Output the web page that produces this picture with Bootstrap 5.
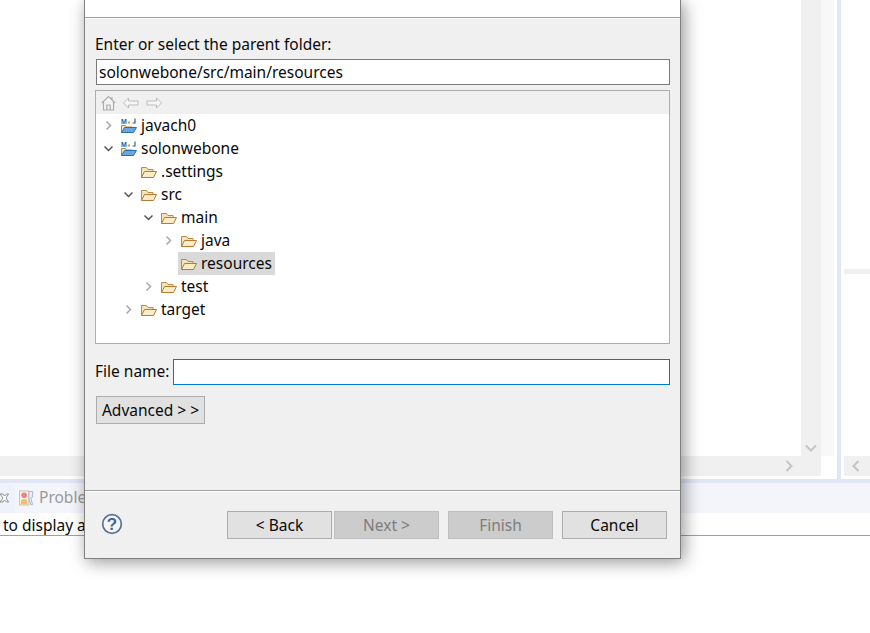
<!doctype html>
<html lang="en"><head><meta charset="utf-8"><title>New File</title>
<link href="https://cdn.jsdelivr.net/npm/bootstrap@5.3.0/dist/css/bootstrap.min.css" rel="stylesheet">
<style>
html,body{margin:0;height:633px;overflow:hidden;background:#fff}
body{font-family:"Noto Sans","Open Sans",sans-serif;font-size:15.5px;color:#0a0a0a}
.desk{width:870px;height:633px;position:relative;overflow:hidden}
.top-area{height:479px}
.editor{width:837px;background:#fff}
.ed-body{height:456px}
.ed-main{width:801px}
.vbar{width:20px;background:#f0f0f0}
.vgap{width:13px;background:#f8f8f8}
.ed-wing{width:3px;background:#fff}
.hbar{height:20px;width:821px;background:#f0f0f0}
.hbar svg{margin-right:28px}
.sash{width:4px;background:#e0e6f5}
.right-pane{flex:1;padding-left:3px;background:#fff}
.r-mark{height:5px;background:#f0f0f0;margin-top:269px;margin-bottom:182px}
.r-hbar{height:20px;background:#f0f0f0}
.blueline{height:4px;background:#e0e6f5}
.tabstrip{height:30px;background:#f4f5fb}
.tab-on{width:15px;height:30px;background:#eef3fb;border-top-right-radius:6px}
.tab-icon{margin-left:4px}
.tab-text{color:#9a9a9a;margin-left:5px}
.msg{height:23px;border-bottom:1px solid #a0a0a0;line-height:24px;padding-left:3px}
.chev{width:9px;height:9px;flex:none}
.dlg{position:absolute;left:84px;top:0;width:597px;height:559px;background:#f0f0f0;border:1px solid #808080;border-top:0;box-shadow:3px 3px 16px rgba(0,0,0,.42)}
.banner{height:18px;background:#fff;border-bottom:1px solid #a0a0a0;box-shadow:0 1px 0 #fff}
.dlg-body{padding:0 10px;height:472px}
.lbl{height:41px;padding-top:14px;line-height:24px}
.path-in{display:block;width:574px;height:26px;margin-left:1px;border:1px solid #7a7a7a;background:#fff;padding:0 2px;font:inherit;color:#0a0a0a;line-height:24px;outline:0;border-radius:0}
.tree-box{margin-top:5px;height:254px;width:575px;background:#fff;border:1px solid #adadad}
.tbar{height:23px;background:#f0f0f0;padding-left:5px;gap:7px}
.row-t{height:23px;line-height:23px;white-space:nowrap}
.row-t svg{flex:none}
.ic{width:17px;height:16px;margin-right:3px;margin-left:3px}
.twisty{width:20px;height:23px;flex:none}
.l0{padding-left:2px}.l1{padding-left:22px}.l2{padding-left:42px}.l3{padding-left:62px}
.sel{background:#d9d9d9;padding-right:3px;display:flex;align-items:center;height:23px}
.fname{margin-top:15px;height:26px;width:575px;gap:4px}
.fname-in{flex:1;min-width:0;height:26px;border:1px solid #0078d7;background:#fff;padding:0 2px;outline:0;border-radius:0}
.w-btn{background:#e1e1e1;border:1px solid #adadad;border-radius:0;color:#0a0a0a;font:inherit;padding:0;height:28px;line-height:24px}
.w-btn:disabled{background:#ccc;color:#7d7d7d;border-color:#bfbfbf;opacity:1}
.adv{margin-top:11px;margin-left:1px;width:109px}
.sep{height:2px;border-top:1px solid #a0a0a0;background:#fff}
.foot{padding:19px 13px 0 16px;height:66px}
.btn-w{width:105px}
.help{width:22px;height:22px;margin-top:2px}
.g1{margin-left:2px}.g2{margin-left:9px}
</style></head><body>
<div class="desk">
 <div class="top-area d-flex">
  <div class="editor">
   <div class="d-flex ed-body">
    <div class="ed-main"></div>
    <div class="vbar d-flex align-items-end justify-content-center pb-1">
     <svg width="12" height="8" viewBox="0 0 12 8"><path d="M1 1.500l5 5 5-5" fill="none" stroke="#c4c4c4" stroke-width="2"/></svg>
    </div>
    <div class="vgap"></div>
    <div class="ed-wing"></div>
   </div>
   <div class="hbar d-flex align-items-center justify-content-end">
    <svg width="8" height="12" viewBox="0 0 8 12"><path d="M1.500 1l5 5-5 5" fill="none" stroke="#c4c4c4" stroke-width="2"/></svg>
   </div>
  </div>
  <div class="sash"></div>
  <div class="right-pane">
   <div class="r-mark"></div>
   <div class="r-hbar d-flex align-items-center ps-2"><svg width="8" height="12" viewBox="0 0 8 12"><path d="M6.500 1l-5 5 5 5" fill="none" stroke="#c4c4c4" stroke-width="2"/></svg></div>
  </div>
 </div>
 <div class="blueline"></div>
 <div class="tabstrip d-flex align-items-center">
  <div class="tab-on d-flex align-items-center">
   <svg width="9" height="10" viewBox="0 0 9 10"><path d="M0 1l3 0 1.500 2 2-2 2 0-2.500 4 2.500 4h-2l-2-2-1.500 2h-3l3-4z" fill="#fff" stroke="#777" stroke-width=".8"/></svg>
  </div>
  <svg class="tab-icon" width="15" height="16" viewBox="0 0 16 16"><rect x=".5" y=".5" width="10" height="15" fill="#f6f1e4" stroke="#c9c3b5"/><path d="M10.500 1h4v6l-2 1 2 7h-2l-2-6z" fill="#e8edf4" stroke="#a7b6cc"/><circle cx="5.500" cy="5" r="3" fill="#e9838a"/><path d="M2 15v-3a3.500 3 0 017 0v3z" fill="#eec070"/></svg>
  <span class="tab-text">Problems</span>
 </div>
 <div class="msg">to display a</div>

 <div class="dlg d-flex flex-column">
  <div class="banner"></div>
  <div class="dlg-body">
   <div class="lbl">Enter or select the parent folder:</div>
   <input class="path-in" value="solonwebone/src/main/resources" aria-label="parent folder">
   <div class="tree-box">
    <div class="tbar d-flex align-items-center">
     <svg width="15" height="16" viewBox="0 0 15 16"><path d="M.8 8L7.500 1.500 14.200 8M2.500 6.800V15h10V6.800M5.800 15v-5h3.400v5M11 2v2.800" fill="#f4f4f4" stroke="#adadad" stroke-width="1.200"/></svg>
     <svg width="16" height="16" viewBox="0 0 16 16"><path d="M.5 8l5-5v3h9.500v4H5.500v3z" fill="#f6f6f6" stroke="#bcbcbc"/></svg>
     <svg width="16" height="16" viewBox="0 0 16 16"><path d="M15.500 8l-5-5v3H1v4h9.500v3z" fill="#f6f6f6" stroke="#bcbcbc"/></svg>
    </div>
    <div class="row-t d-flex align-items-center l0"><span class="twisty d-flex align-items-center justify-content-center"><svg class="chev" viewBox="0 0 9 9"><use href="#c-r"/></svg></span><svg class="ic" viewBox="0 0 17 16"><use href="#proj"/></svg>javach0</div>
    <div class="row-t d-flex align-items-center l0"><span class="twisty d-flex align-items-center justify-content-center"><svg class="chev" viewBox="0 0 9 9"><use href="#c-d"/></svg></span><svg class="ic" viewBox="0 0 17 16"><use href="#proj"/></svg>solonwebone</div>
    <div class="row-t d-flex align-items-center l1"><span class="twisty"></span><svg class="ic" viewBox="0 0 17 16"><use href="#fold"/></svg>.settings</div>
    <div class="row-t d-flex align-items-center l1"><span class="twisty d-flex align-items-center justify-content-center"><svg class="chev" viewBox="0 0 9 9"><use href="#c-d"/></svg></span><svg class="ic" viewBox="0 0 17 16"><use href="#fold"/></svg>src</div>
    <div class="row-t d-flex align-items-center l2"><span class="twisty d-flex align-items-center justify-content-center"><svg class="chev" viewBox="0 0 9 9"><use href="#c-d"/></svg></span><svg class="ic" viewBox="0 0 17 16"><use href="#fold"/></svg>main</div>
    <div class="row-t d-flex align-items-center l3"><span class="twisty d-flex align-items-center justify-content-center"><svg class="chev" viewBox="0 0 9 9"><use href="#c-r"/></svg></span><svg class="ic" viewBox="0 0 17 16"><use href="#fold"/></svg>java</div>
    <div class="row-t d-flex align-items-center l3"><span class="twisty"></span><span class="sel"><svg class="ic" viewBox="0 0 17 16"><use href="#fold"/></svg>resources</span></div>
    <div class="row-t d-flex align-items-center l2"><span class="twisty d-flex align-items-center justify-content-center"><svg class="chev" viewBox="0 0 9 9"><use href="#c-r"/></svg></span><svg class="ic" viewBox="0 0 17 16"><use href="#fold"/></svg>test</div>
    <div class="row-t d-flex align-items-center l1"><span class="twisty d-flex align-items-center justify-content-center"><svg class="chev" viewBox="0 0 9 9"><use href="#c-r"/></svg></span><svg class="ic" viewBox="0 0 17 16"><use href="#fold"/></svg>target</div>
   </div>
   <div class="fname d-flex align-items-center"><label for="fn">File name:</label><input id="fn" class="fname-in"></div>
   <button class="w-btn adv" type="button">Advanced &gt; &gt;</button>
  </div>
  <div class="sep"></div>
  <div class="foot d-flex">
   <svg class="help" viewBox="0 0 22 22"><circle cx="11" cy="11" r="9.300" fill="#f4f6fa" stroke="#5a7198" stroke-width="1.700"/><text x="11" y="17" text-anchor="middle" font-family="Liberation Sans" font-weight="700" font-size="17" fill="#4a6390">?</text></svg>
   <div class="ms-auto d-flex">
    <button class="w-btn btn-w" type="button">&lt; Back</button>
    <button class="w-btn btn-w g1" type="button" disabled>Next &gt;</button>
    <button class="w-btn btn-w g2" type="button" disabled>Finish</button>
    <button class="w-btn btn-w g2" type="button">Cancel</button>
   </div>
  </div>
 </div>
</div>
<svg width="0" height="0" class="position-absolute">
 <defs>
  <g id="c-r"><path d="M2.500 .5l4 4-4 4" fill="none" stroke="#a8a8a8" stroke-width="1.500"/></g>
  <g id="c-d"><path d="M.5 2.500l4 4 4-4" fill="none" stroke="#555" stroke-width="1.500"/></g>
  <g id="fold"><path d="M.5 13.500V3.500h5l1.500 2h5v2" fill="#f7e3b8" stroke="#b98a4a"/><path d="M.5 13.500l3-6h12l-3 6z" fill="#fbecc8" stroke="#b57c35"/></g>
  <g id="proj"><path d="M.5 14.500V7.500h4l1 1.500h6v1" fill="#f7e3b8" stroke="#b98a4a"/><path d="M.5 14.500l3-5h12l-3 5z" fill="#6aa6e0" stroke="#2f6cad"/><text x="0" y="6" font-family="Liberation Sans" font-weight="700" font-size="7" fill="#2f5a8f">M</text><circle cx="8" cy="4.500" r="1.200" fill="#d8a24a"/><path d="M14 .5v4.500h-2.500" fill="none" stroke="#3a5f8f" stroke-width="1.200"/></g>
 </defs>
</svg>
<script src="https://cdn.jsdelivr.net/npm/bootstrap@5.3.0/dist/js/bootstrap.bundle.min.js"></script>
</body></html>
